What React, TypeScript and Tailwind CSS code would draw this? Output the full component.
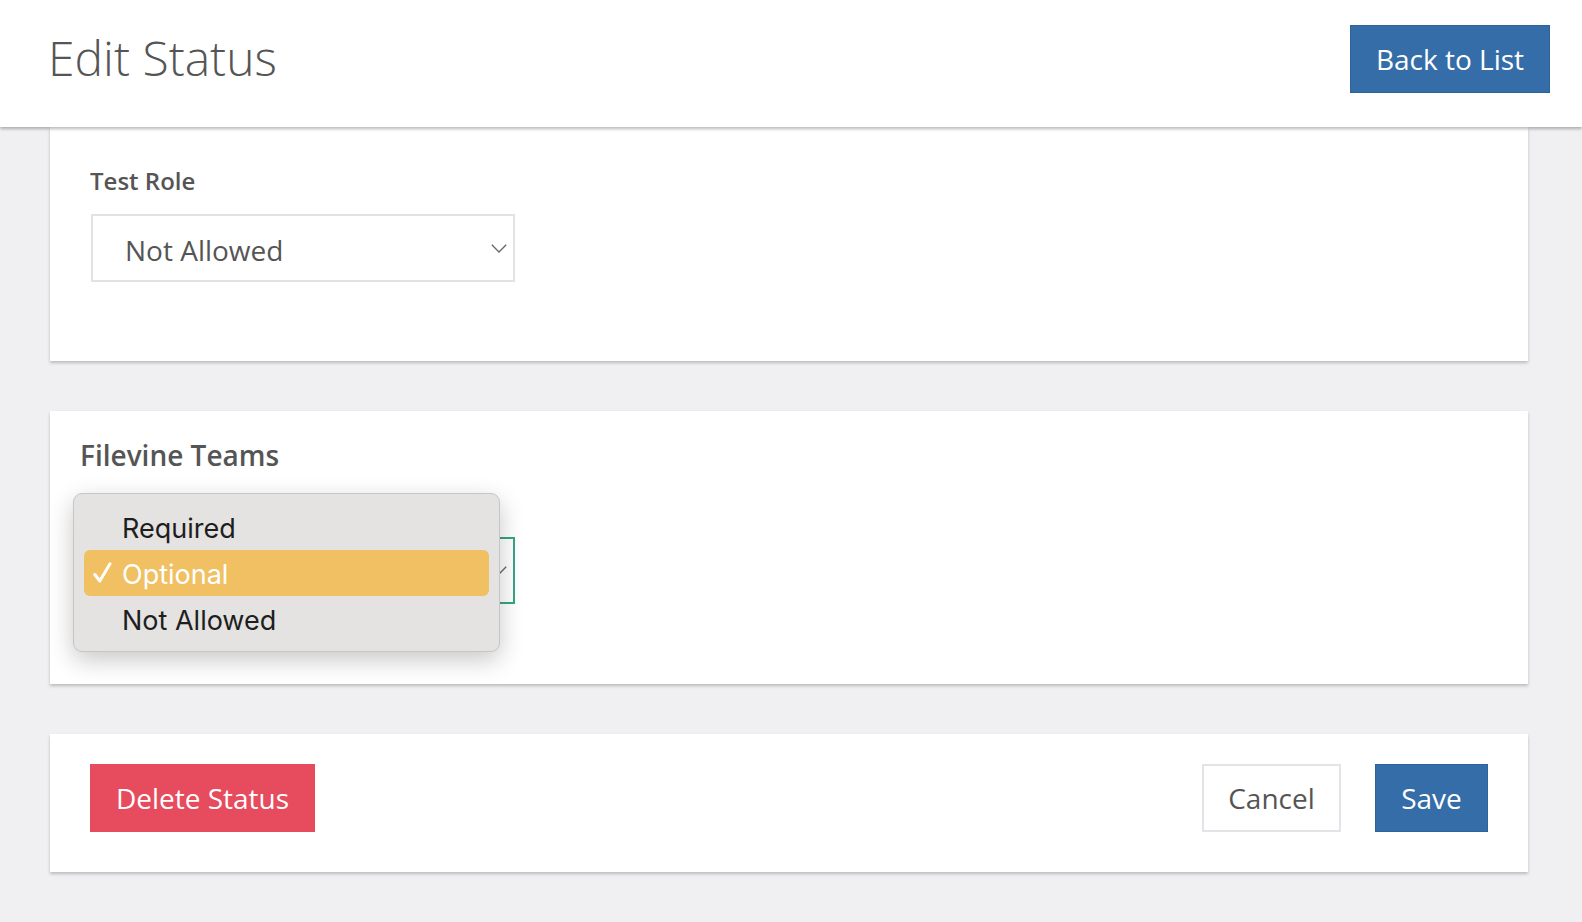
function Chevron() {
  return (
    <svg width="16" height="9" viewBox="0 0 16 9" fill="none" className="shrink-0">
      <polyline points="0.8,0.8 8,8 15.2,0.8" stroke="#666" strokeWidth="1.3" />
    </svg>
  );
}

function Check() {
  return (
    <svg width="19" height="21" viewBox="0 0 19 21" fill="none">
      <path d="M1.8 12.5 L6.8 19 L17 1.8" stroke="white" strokeWidth="3" strokeLinecap="round" strokeLinejoin="round" />
    </svg>
  );
}

export default function App() {
  return (
    <div className="min-h-[922px] bg-[#f0f0f2] font-['Open_Sans',sans-serif] text-[#555]">
      <header className="relative z-10 flex h-[127px] items-start justify-between bg-white pl-[48px] pr-[32px] pt-[25px] shadow-[0_2px_3px_rgba(0,0,0,0.28)]">
        <h1 className="text-[48px] font-light leading-[65px] text-[#555]">Edit Status</h1>
        <button className="h-[68px] w-[200px] border border-[#2d6399] bg-[#346da8] text-[28px] leading-none text-white">
          Back to List
        </button>
      </header>

      <main className="flex flex-col gap-[50px] pb-[50px] pl-[50px] pr-[54px]">
        <section className="bg-white pb-[79px] pl-[41px] pt-[37px] shadow-[0_2px_3px_rgba(0,0,0,0.22)]">
          <div className="-ml-[1px] text-[24px] font-semibold leading-[33px] text-[#555]">Test Role</div>
          <div className="mt-[17px] flex h-[68px] w-[424px] items-center justify-between border-2 border-[#e2e2e2] pl-[32px] pr-[6px]">
            <span className="pt-[3px] text-[28px] leading-none text-[#555]">Not Allowed</span>
            <Chevron />
          </div>
        </section>

        <section className="relative bg-white pb-[80px] pl-[30px] pt-[25px] shadow-[0_2px_3px_rgba(0,0,0,0.22)]">
          <div className="text-[28px] font-semibold leading-[38px] text-[#555]">Filevine Teams</div>
          <div className="ml-[11px] mt-[63px] flex h-[67px] w-[424px] items-center justify-end border-2 border-[#36a485] pr-[6px]">
            <Chevron />
          </div>

          <div className="absolute left-[23px] top-[82px] z-20 h-[159px] w-[427px] rounded-[9px] border border-[#c6c6c6] bg-[#e4e3e1] px-[10px] pb-[10px] pt-[10px] font-['Inter',sans-serif] text-[27px] leading-[46px] text-[#1e1e1e] shadow-[0_8px_24px_rgba(0,0,0,0.22)]">
            <div className="h-[46px] pl-[38px] pt-[2px]">Required</div>
            <div className="relative h-[46px] rounded-[6px] bg-[#f0c062] pl-[38px] pt-[2px] text-white">
              <span className="absolute left-[9px] top-[12px]">
                <Check />
              </span>
              Optional
            </div>
            <div className="h-[46px] pl-[38px] pt-[2px]">Not Allowed</div>
          </div>
        </section>

        <section className="flex items-center justify-between bg-white pb-[40px] pl-[40px] pr-[40px] pt-[30px] shadow-[0_2px_3px_rgba(0,0,0,0.22)]">
          <button className="h-[68px] w-[225px] bg-[#e64b5e] text-[28px] leading-none text-white">Delete Status</button>
          <div className="flex items-center gap-[34px]">
            <button className="h-[68px] w-[139px] border-2 border-[#e2e4e7] bg-white text-[28px] leading-none text-[#555]">
              Cancel
            </button>
            <button className="h-[68px] w-[113px] border border-[#2d6399] bg-[#346da8] text-[28px] leading-none text-white">
              Save
            </button>
          </div>
        </section>
      </main>
    </div>
  );
}
